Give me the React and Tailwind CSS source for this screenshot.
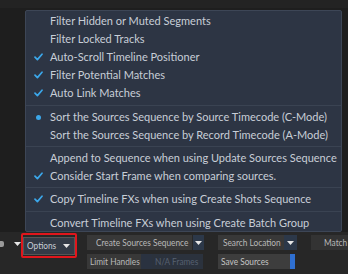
import React from "react";

const Check = () => (
  <svg width="9" height="8" viewBox="0 0 9 8" className="block">
    <path d="M1 4.2 L3.4 6.6 L8 1.2" stroke="#3ba7ea" strokeWidth="1.7" fill="none" strokeLinecap="round" strokeLinejoin="round" />
  </svg>
);

const Dot = () => <div className="w-[5px] h-[5px] rounded-full bg-[#3ba7ea]" />;

const Item = ({ mark, children }) => (
  <div className="flex items-center h-[18px]">
    <div className="w-[24px] flex justify-center pl-[1px]">
      {mark === "check" ? <Check /> : mark === "dot" ? <Dot /> : null}
    </div>
    <span className="whitespace-nowrap">{children}</span>
  </div>
);

const Sep = ({ wide }) => (
  <div className={wide ? "h-[1px] bg-[#3a4352] mt-[3px] mb-[2px]" : "h-[1px] bg-[#3a4352] my-[2px]"} />
);

const Tri = () => (
  <svg width="7" height="4" viewBox="0 0 7 4" className="block shrink-0">
    <path d="M0 0 H7 L3.5 4 Z" fill="#e6e6e6" />
  </svg>
);

const Lbl = ({ children }) => (
  <span className="inline-block scale-x-[0.83] origin-left whitespace-nowrap">{children}</span>
);

export default function App() {
  return (
    <div className="relative w-[348px] h-[274px] bg-[#1e1e1e] overflow-hidden text-[11px] font-['Lato','Open_Sans',sans-serif]">
      <div className="h-[8px] bg-[#232323]" />
      {/* bottom bar */}
      <div className="absolute left-0 right-0 top-[232px] bottom-0 bg-[#272727] text-[#b8b8b8] text-[10px] whitespace-nowrap">
        <div className="flex items-start pt-[3px]">
          <div className="w-[21px] flex items-center h-[18px]">
            <div className="w-[5px] h-[6px] bg-[#9a9a9a] rounded-r-[2px]" />
            <div className="ml-[10px]"><Tri /></div>
          </div>
          <div className="w-[60px] h-[25px] -mt-[2px] border-2 border-[#e0161c] rounded-[2px] flex items-center justify-center">
            <div className="w-[52px] h-[18px] bg-[#333a46] border border-[#555] flex items-center justify-between pl-[3px] pr-[4px] text-[#c9ced6] overflow-hidden">
              <Lbl>Options</Lbl>
              <Tri />
            </div>
          </div>
          <div className="ml-[10px] flex flex-col gap-[4px]">
            <div className="flex h-[15px]">
              <div className="w-[105px] bg-[#383838] flex items-center pl-[9px] overflow-hidden"><Lbl>Create Sources Sequence</Lbl></div>
              <div className="w-[11px] ml-[1px] bg-[#2c3849] flex items-center justify-center"><Tri /></div>
            </div>
            <div className="flex h-[15px]">
              <div className="w-[54px] bg-[#383838] flex items-center pl-[3px] overflow-hidden"><Lbl>Limit Handles</Lbl></div>
              <div className="w-[11px] bg-[#2a3240]" />
              <div className="w-[51px] bg-[#2b323d] flex items-center pl-[3px] text-[#566070] overflow-hidden"><Lbl>N/A Frames</Lbl></div>
            </div>
          </div>
          <div className="ml-[14px] flex flex-col gap-[4px]">
            <div className="flex h-[15px]">
              <div className="w-[66px] bg-[#383838] flex items-center pl-[5px] overflow-hidden"><Lbl>Search Location</Lbl></div>
              <div className="w-[13px] bg-[#2c3849] flex items-center justify-center"><Tri /></div>
            </div>
            <div className="flex h-[15px]">
              <div className="w-[72px] bg-[#3d3d3d] flex items-center pl-[3px] text-[#c4c4c4] overflow-hidden"><Lbl>Save Sources</Lbl></div>
              <div className="w-[5px] bg-[#2f6fd0]" />
            </div>
          </div>
          <div className="ml-[14px] flex h-[15px]">
            <div className="w-[40px] bg-[#333333] flex items-center pl-[13px] overflow-hidden"><Lbl>Match</Lbl></div>
          </div>
        </div>
      </div>
      {/* menu */}
      <div className="absolute left-[25px] top-[10px] w-[317px] h-[222px] bg-[#2d3544] border border-[#3d4656] rounded-[2px] text-[#c8ced7] pt-[1px]">
        <Item>Filter Hidden or Muted Segments</Item>
        <Item>Filter Locked Tracks</Item>
        <Item mark="check">Auto-Scroll Timeline Positioner</Item>
        <Item mark="check">Filter Potential Matches</Item>
        <Item mark="check">Auto Link Matches</Item>
        <Sep wide />
        <Item mark="dot">Sort the Sources Sequence by Source Timecode (C-Mode)</Item>
        <Item>Sort the Sources Sequence by Record Timecode (A-Mode)</Item>
        <Sep />
        <Item>Append to Sequence when using Update Sources Sequence</Item>
        <Item mark="check">Consider Start Frame when comparing sources.</Item>
        <Sep />
        <Item mark="check">Copy Timeline FXs when using Create Shots Sequence</Item>
        <Sep wide />
        <Item>Convert Timeline FXs when using Create Batch Group</Item>
      </div>
    </div>
  );
}
